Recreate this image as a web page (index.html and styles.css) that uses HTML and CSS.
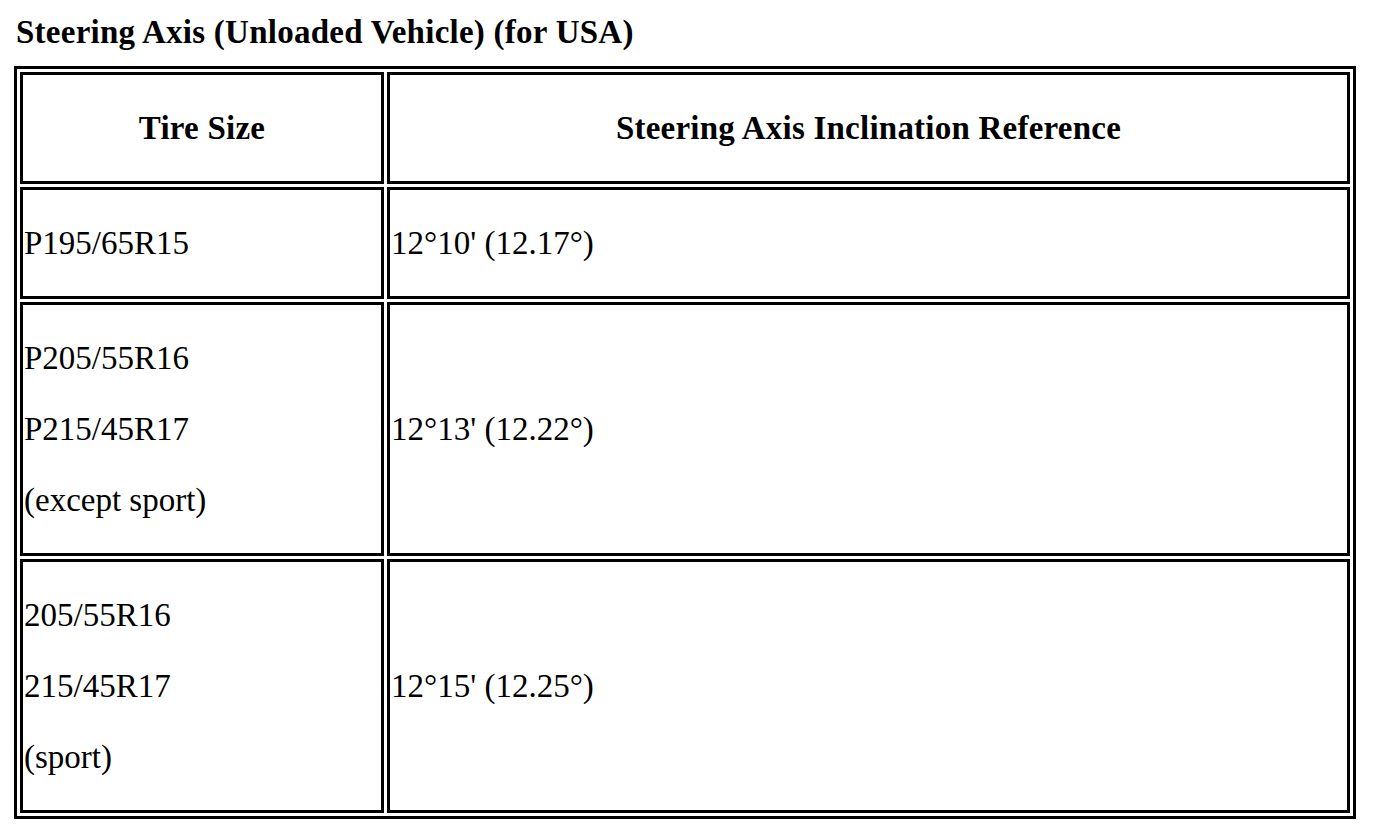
FILE: index.html
```html
<!DOCTYPE html>
<html>
<head>
<meta charset="utf-8">
<link rel="stylesheet" href="styles.css">
</head>
<body>
<div class="title">Steering Axis (Unloaded Vehicle) (for USA)</div>
<table class="spec">
  <tr>
    <th class="col-size"><p>Tire Size</p></th>
    <th><p>Steering Axis Inclination Reference</p></th>
  </tr>
  <tr>
    <td><p>P195/65R15</p></td>
    <td><p>12°10' (12.17°)</p></td>
  </tr>
  <tr>
    <td><p>P205/55R16</p><p>P215/45R17</p><p>(except sport)</p></td>
    <td><p>12°13' (12.22°)</p></td>
  </tr>
  <tr>
    <td><p>205/55R16</p><p>215/45R17</p><p>(sport)</p></td>
    <td><p>12°15' (12.25°)</p></td>
  </tr>
</table>
</body>
</html>
```

FILE: styles.css
```css
html, body {
  margin: 0;
  padding: 0;
  background: #fff;
  color: #000;
}
body {
  padding: 13px 14px 0 14px;
  font-family: "Liberation Serif", "Times New Roman", serif;
  font-size: 33px;
  line-height: 38px;
}
.title {
  font-weight: bold;
  letter-spacing: 0.25px;
  padding-left: 2px;
  margin-bottom: 15px;
}
.spec {
  border-collapse: separate;
  border-spacing: 3px;
  border: 3px solid #000;
  width: 1342px;
}
.spec th,
.spec td {
  border: 3px solid #000;
  padding: 1px;
  vertical-align: middle;
}
.spec th {
  font-weight: bold;
  letter-spacing: 0.23px;
  text-align: center;
}
.spec td {
  text-align: left;
}
.col-size {
  width: 356px;
}
.spec p {
  margin: 33px 0;
}
```
